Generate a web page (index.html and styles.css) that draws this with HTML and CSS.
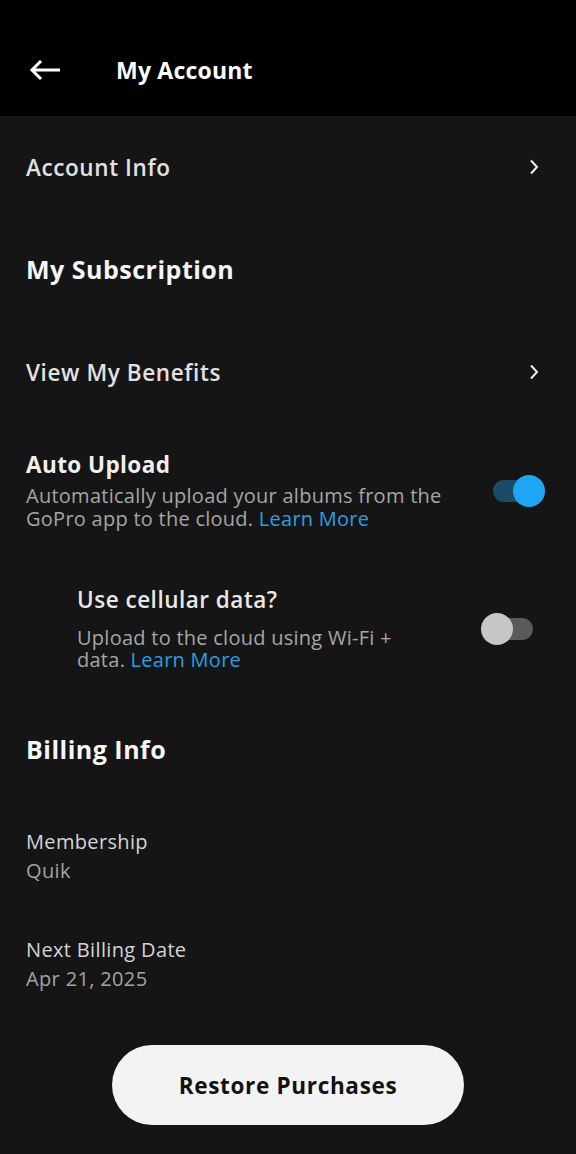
FILE: index.html
```html
<!DOCTYPE html>
<html lang="en">
<head>
<meta charset="utf-8">
<title>My Account</title>
<link rel="stylesheet" href="styles.css">
</head>
<body>
<header class="topbar">
  <svg class="back" width="32" height="22" viewBox="0 0 32 22" aria-hidden="true">
    <path d="M31 11H3M12 2L3 11l9 9" fill="none" stroke="#fff" stroke-width="3" stroke-linecap="butt" stroke-linejoin="miter"/>
  </svg>
  <h1 class="title">My Account</h1>
</header>
<main class="content">
  <div class="nav-row row-account">
    <span class="nav-label">Account Info</span>
    <svg class="chev" width="10" height="16" viewBox="0 0 10 16" aria-hidden="true"><path d="M2 1.5l6 6.5-6 6.5" fill="none" stroke="#eee" stroke-width="2"/></svg>
  </div>
  <h2 class="section sec-sub">My Subscription</h2>
  <div class="nav-row row-benefits">
    <span class="nav-label">View My Benefits</span>
    <svg class="chev" width="10" height="16" viewBox="0 0 10 16" aria-hidden="true"><path d="M2 1.5l6 6.5-6 6.5" fill="none" stroke="#eee" stroke-width="2"/></svg>
  </div>
  <div class="toggle-row row-auto">
    <div class="toggle-text">
      <div class="t-title">Auto Upload</div>
      <div class="t-desc"><span class="line">Automatically upload your albums from the</span><span class="line">GoPro app to the cloud. <span class="link">Learn More</span></span></div>
    </div>
    <div class="switch on"><span class="knob"></span></div>
  </div>
  <div class="toggle-row row-cell">
    <div class="toggle-text">
      <div class="t-title sub">Use cellular data?</div>
      <div class="t-desc sub"><span class="line">Upload to the cloud using Wi-Fi +</span><span class="line">data. <span class="link">Learn More</span></span></div>
    </div>
    <div class="switch off"><span class="knob"></span></div>
  </div>
  <h2 class="section sec-bill">Billing Info</h2>
  <div class="info info-member">
    <div class="info-label">Membership</div>
    <div class="info-value">Quik</div>
  </div>
  <div class="info info-date">
    <div class="info-label">Next Billing Date</div>
    <div class="info-value">Apr 21, 2025</div>
  </div>
  <div class="btn-wrap">
    <button class="restore">Restore Purchases</button>
  </div>
</main>
</body>
</html>
```
FILE: styles.css
```css
* { box-sizing: border-box; }
html, body { margin: 0; padding: 0; }
body {
  background: #151515;
  font-family: "Open Sans", "Lato", sans-serif;
  color: #e6e6e6;
  width: 576px;
  height: 1154px;
  overflow: hidden;
}
.topbar {
  height: 116px;
  background: #000;
  display: flex;
  align-items: center;
  padding-left: 29px;
  padding-top: 24px;
}
.back { display: block; }
.title {
  margin: 0 0 0 55px;
  font-size: 23px;
  font-weight: 700;
  color: #fff;
  letter-spacing: 0.2px;
}
.content { padding: 0 0 0 26px; }
.nav-row {
  display: flex;
  align-items: center;
  justify-content: space-between;
  padding-right: 37px;
}
.row-account { height: 102px; }
.row-benefits { height: 104px; }
.nav-label {
  font-size: 22.5px;
  font-weight: 600;
  color: #e2e2e2;
  letter-spacing: 0.6px;
}
.chev { display: block; }
.section {
  margin: 0;
  font-size: 25px;
  font-weight: 700;
  color: #f6f6f6;
  display: flex;
  align-items: center;
  letter-spacing: 0.5px;
}
.sec-sub { height: 102px; }
.sec-bill { height: 28px; margin-top: 64px; }
.toggle-row {
  display: flex;
  align-items: center;
  justify-content: space-between;
}
.row-auto { padding-top: 27px; padding-right: 31px; }
.row-cell { padding-top: 56px; padding-left: 51px; padding-right: 43px; }
.t-title {
  font-size: 22.5px;
  font-weight: 700;
  line-height: 28px;
  color: #f0f0f0;
  letter-spacing: 0.42px;
}
.t-title.sub { font-weight: 600; color: #e8e8e8; letter-spacing: 0.5px; }
.t-desc {
  margin-top: 5px;
  font-size: 20px;
  color: #a6a6a6;
  letter-spacing: 0.26px;
}
.t-desc .line { display: block; height: 23px; line-height: 23px; white-space: nowrap; }
.t-desc.sub { margin-top: 13px; }
.t-desc.sub .line { height: 22px; line-height: 22px; }
.link { color: #2a9fe2; }
.switch {
  position: relative;
  width: 52px;
  height: 32px;
  flex: none;
}
.switch::before {
  content: "";
  position: absolute;
  top: 5px;
  height: 22px;
  border-radius: 11px;
}
.switch.on::before { left: 0; right: 6px; background: #1d4a66; }
.switch.off::before { left: 12px; right: 0; background: #5a5a5a; }
.knob {
  position: absolute;
  top: 0;
  width: 32px;
  height: 32px;
  border-radius: 50%;
}
.switch.on .knob { right: 0; background: #1ea6f4; }
.switch.off .knob { left: 0; background: #c6c6c6; }
.info { line-height: 29px; font-size: 20px; letter-spacing: 0.35px; }
.info-member { margin-top: 64px; }
.info-date { margin-top: 50px; }
.info-label { color: #d4d4d4; }
.info-value { color: #a3a3a3; }
.btn-wrap {
  display: flex;
  justify-content: center;
  padding-right: 26px;
  margin-top: 52px;
}
.restore {
  width: 352px;
  height: 80px;
  border: 0;
  border-radius: 40px;
  background: #f2f3f2;
  color: #111;
  font-family: inherit;
  font-size: 22.5px;
  font-weight: 700;
  letter-spacing: 0.68px;
}
```
